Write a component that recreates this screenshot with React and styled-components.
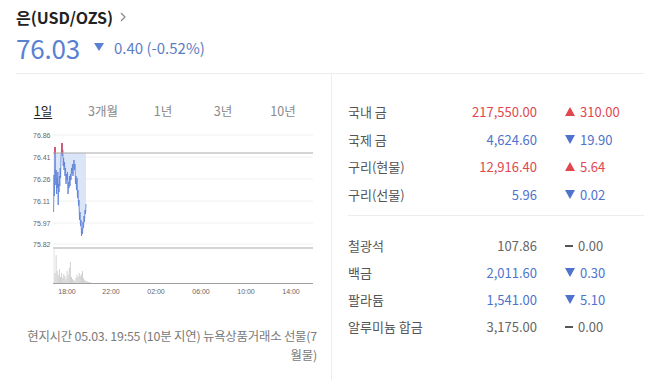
import React from "react";
import styled, { createGlobalStyle } from "styled-components";

const GlobalStyle = createGlobalStyle`
  body {
    margin: 0;
    background: #fff;
    font-family: "Noto Sans CJK KR", "Noto Sans", sans-serif;
    color: #333;
  }
`;

const RED = "#e0474f";
const BLUE = "#4f73cc";

const metals = [
  [
    { name: "국내 금", value: "217,550.00", change: "310.00", dir: "up" },
    { name: "국제 금", value: "4,624.60", change: "19.90", dir: "down" },
    { name: "구리(현물)", value: "12,916.40", change: "5.64", dir: "up" },
    { name: "구리(선물)", value: "5.96", change: "0.02", dir: "down" },
  ],
  [
    { name: "철광석", value: "107.86", change: "0.00", dir: "flat" },
    { name: "백금", value: "2,011.60", change: "0.30", dir: "down" },
    { name: "팔라듐", value: "1,541.00", change: "5.10", dir: "down" },
    { name: "알루미늄 합금", value: "3,175.00", change: "0.00", dir: "flat" },
  ],
];

const tabs = ["1일", "3개월", "1년", "3년", "10년"];

const yLabels = [
  ["76.86", 135],
  ["76.41", 157],
  ["76.26", 179],
  ["76.11", 201],
  ["75.97", 223],
  ["75.82", 244],
];

const times = [
  ["18:00", 67],
  ["22:00", 111],
  ["02:00", 156],
  ["06:00", 201],
  ["10:00", 246],
  ["14:00", 291],
];

// jagged 1-day price trace, page coordinates
const pricePoints = [
  [53.6, 212], [54, 175], [54.4, 196], [54.8, 160], [55, 147], [55.4, 168],
  [55.8, 185], [56.2, 170], [56.6, 194], [57, 178], [57.4, 188], [57.8, 172],
  [58.2, 205], [58.6, 184], [59, 192], [59.4, 176], [59.8, 186], [60.2, 168],
  [60.6, 178], [61, 158], [61.5, 150], [62, 143], [62.4, 156], [62.8, 150],
  [63.2, 166], [63.6, 158], [64, 170], [64.5, 162], [65, 176], [65.5, 168],
  [66, 184], [66.5, 174], [67, 180], [67.5, 172], [68, 194], [68.5, 182],
  [69, 188], [69.5, 176], [70, 186], [70.5, 174], [71, 180], [71.5, 168],
  [72, 174], [72.5, 164], [73, 176], [73.5, 166], [74, 160], [74.5, 170],
  [75, 164], [75.5, 184], [76, 176], [76.5, 190], [77, 178], [77.5, 198],
  [78, 190], [78.5, 206], [79, 200], [79.5, 220], [80, 212], [80.5, 226],
  [81, 220], [81.5, 236], [82, 228], [82.5, 234], [83, 222], [83.5, 228],
  [84, 216], [84.5, 222], [85, 210], [85.5, 214], [86, 204],
];

const volumes = [
  10, 28, 12, 8, 14, 6, 10, 5, 9, 7, 4, 12, 8, 15, 21, 6, 4, 3, 2, 5, 8, 6,
  10, 7, 9, 12, 5, 3, 2, 2, 1, 1, 1,
];

const Page = styled.div`
  padding: 7px 19px 0 16px;
  height: 373px;
  display: flex;
  flex-direction: column;
`;

const Header = styled.header`
  display: flex;
  flex-direction: column;
  margin-bottom: 11px;
`;

const Title = styled.h1`
  margin: 0;
  display: flex;
  align-items: center;
  gap: 7px;
  font-size: 16px;
  line-height: 20px;
  font-weight: 700;
  color: #222;
`;

const PriceRow = styled.div`
  display: flex;
  align-items: center;
  height: 30px;
  margin-top: 5px;
`;

const Price = styled.span`
  font-size: 26px;
  color: #5a80d2;
  letter-spacing: -0.2px;
  margin-right: 14px;
`;

const Delta = styled.span`
  font-size: 15px;
  color: #5d7cc4;
  margin-left: 10px;
`;

const Triangle = styled.span`
  display: inline-block;
  width: 0;
  height: 0;
  border-left: ${(p) => p.$size / 2 + 0.5}px solid transparent;
  border-right: ${(p) => p.$size / 2 + 0.5}px solid transparent;
  ${(p) =>
    p.$dir === "up"
      ? `border-bottom: ${p.$size - 1}px solid ${p.$color};`
      : `border-top: ${p.$size - 1}px solid ${p.$color};`}
`;

const Dash = styled.span`
  display: inline-block;
  width: 8px;
  height: 2px;
  background: #555;
`;

const Body = styled.main`
  flex: 1;
  display: grid;
  grid-template-columns: 316px 1fr;
  border-top: 1px solid #ededed;
`;

const LeftPanel = styled.section`
  border-right: 1px solid #ededed;
  padding: 28px 14px 0 0;
  display: flex;
  flex-direction: column;
`;

const Tabs = styled.nav`
  display: grid;
  grid-template-columns: repeat(5, 60px);
  margin-left: -3px;
`;

const Tab = styled.span`
  text-align: center;
  font-size: 12.5px;
  line-height: 18px;
  color: ${(p) => (p.$active ? "#222" : "#8a8a8a")};
  text-decoration: ${(p) => (p.$active ? "underline" : "none")};
  text-underline-offset: 2px;
`;

const ChartSvg = styled.svg`
  display: block;
  margin-top: 8px;
  width: 300px;
  height: 175px;
`;

const Footnote = styled.p`
  margin: 24px 0 0;
  text-align: right;
  font-size: 12.4px;
  line-height: 19px;
  color: #7a7a7a;
  letter-spacing: -0.2px;
`;

const RightPanel = styled.section`
  padding: 24px 0 0 16px;
  display: flex;
  flex-direction: column;
`;

const Group = styled.div`
  display: flex;
  flex-direction: column;
`;

const Separator = styled.hr`
  border: 0;
  border-top: 1px solid #ececec;
  margin: 7px 0 16px;
  width: 100%;
`;

const Row = styled.div`
  display: grid;
  grid-template-columns: 1fr auto 79px;
  column-gap: 28px;
  align-items: center;
  height: ${(p) => p.$h}px;
  font-size: 13px;
`;

const Label = styled.span`
  color: #555;
`;

const Value = styled.span`
  text-align: right;
  color: ${(p) => (p.$dir === "up" ? RED : p.$dir === "down" ? BLUE : "#666")};
`;

const Change = styled.span`
  display: flex;
  align-items: center;
  gap: 5px;
  color: ${(p) => (p.$dir === "up" ? RED : p.$dir === "down" ? BLUE : "#666")};
`;

function Chart() {
  const line = pricePoints.map((p) => p.join(",")).join(" ");
  const fill =
    "53.6,153 " +
    pricePoints.map(([x, y]) => `${x},${Math.max(y, 153)}`).join(" ") +
    " 86,153";
  return (
    <ChartSvg viewBox="16 128 300 175">
      {yLabels.map(([t, y]) => (
        <g key={t}>
          <line x1="53" x2="313" y1={y} y2={y} stroke="#f0f0f0" strokeWidth="1" />
          <text x="33" y={y + 2.5} fontSize="7" fill="#666" fontFamily="Liberation Sans, sans-serif">
            {t}
          </text>
        </g>
      ))}
      <polygon points={fill} fill="#dae5f8" />
      <polyline points={line} fill="none" stroke="#6185d8" strokeWidth="0.9" />
      <polyline points="54.7,154 55,147 55.3,154" fill="none" stroke="#e0475a" strokeWidth="1" />
      <polyline points="61.6,154 62,143 62.3,154" fill="none" stroke="#e0475a" strokeWidth="1" />
      <line x1="53" x2="313" y1="153" y2="153" stroke="#a9a9a9" strokeWidth="1.2" />
      <line x1="53" x2="313" y1="248" y2="248" stroke="#a9a9a9" strokeWidth="1.2" />
      <line x1="54" x2="54" y1="248" y2="283" stroke="#ddd" strokeWidth="0.8" />
      {volumes.map((h, i) => (
        <line
          key={i}
          x1={55 + i * 1.1}
          x2={55 + i * 1.1}
          y1={283}
          y2={283 - h}
          stroke="#c4c4c4"
          strokeWidth="0.8"
        />
      ))}
      <line x1="53" x2="313" y1="283.5" y2="283.5" stroke="#a0a0a0" strokeWidth="1" />
      {times.map(([t, x]) => (
        <text
          key={t}
          x={x}
          y="293.5"
          fontSize="7"
          textAnchor="middle"
          fill="#666"
          fontFamily="Liberation Sans, sans-serif"
        >
          {t}
        </text>
      ))}
    </ChartSvg>
  );
}

export default function App() {
  return (
    <>
      <GlobalStyle />
      <Page>
        <Header>
          <Title>
            은(USD/OZS)
            <svg width="6" height="10" viewBox="0 0 6 10">
              <path d="M1 1 L5 5 L1 9" fill="none" stroke="#888" strokeWidth="1.2" />
            </svg>
          </Title>
          <PriceRow>
            <Price>76.03</Price>
            <Triangle $dir="down" $size={9} $color="#5a80d2" />
            <Delta>0.40 (-0.52%)</Delta>
          </PriceRow>
        </Header>
        <Body>
          <LeftPanel>
            <Tabs>
              {tabs.map((t, i) => (
                <Tab key={t} $active={i === 0}>
                  {t}
                </Tab>
              ))}
            </Tabs>
            <Chart />
            <Footnote>
              현지시간 05.03. 19:55 (10분 지연) 뉴욕상품거래소 선물(7
              <br />
              월물)
            </Footnote>
          </LeftPanel>
          <RightPanel>
            {metals.map((group, gi) => (
              <React.Fragment key={gi}>
                {gi > 0 && <Separator />}
                <Group>
                  {group.map((m) => (
                    <Row key={m.name} $h={gi === 0 ? 27.5 : 27}>
                      <Label>{m.name}</Label>
                      <Value $dir={m.dir}>{m.value}</Value>
                      <Change $dir={m.dir}>
                        {m.dir === "flat" ? (
                          <Dash />
                        ) : (
                          <Triangle
                            $dir={m.dir}
                            $size={10}
                            $color={m.dir === "up" ? RED : BLUE}
                          />
                        )}
                        {m.change}
                      </Change>
                    </Row>
                  ))}
                </Group>
              </React.Fragment>
            ))}
          </RightPanel>
        </Body>
      </Page>
    </>
  );
}
